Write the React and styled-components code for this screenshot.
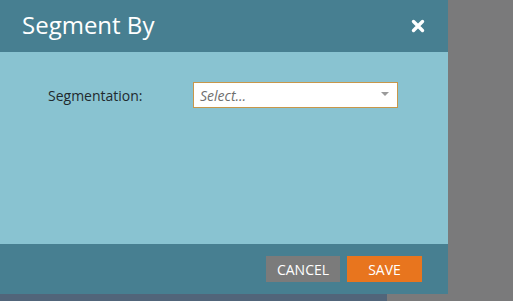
import React from "react";
import styled, { createGlobalStyle } from "styled-components";

const Global = createGlobalStyle`
  html, body { margin: 0; padding: 0; }
  body {
    width: 513px;
    height: 301px;
    overflow: hidden;
    background: #7a7a7b;
    font-family: "Open Sans", "Noto Sans", sans-serif;
  }
`;

const Page = styled.div`
  display: flex;
  flex-direction: column;
  width: 513px;
  height: 301px;
`;

const Dialog = styled.div`
  width: 448px;
  height: 294px;
  display: flex;
  flex-direction: column;
  background: #89c3d1;
`;

const Header = styled.div`
  height: 52px;
  flex: none;
  background: #477f91;
  display: flex;
  align-items: center;
  justify-content: space-between;
  padding: 0 22px 0 22px;
  box-sizing: border-box;
`;

const Title = styled.h1`
  margin: 0;
  font-size: 24px;
  font-weight: 400;
  color: #ffffff;
  line-height: 1;
  padding-bottom: 2px;
`;

const CloseButton = styled.button`
  border: 0;
  background: transparent;
  padding: 0;
  width: 16px;
  height: 16px;
  display: flex;
  align-items: center;
  justify-content: center;
  cursor: pointer;
  margin-bottom: 1px;
`;

const Body = styled.div`
  flex: 1;
  padding: 30px 0 0 48px;
`;

const FieldRow = styled.div`
  display: flex;
  align-items: center;
`;

const Label = styled.label`
  width: 145px;
  font-size: 14px;
  color: #1f2a2e;
`;

const SelectBox = styled.div`
  width: 205px;
  height: 26px;
  box-sizing: border-box;
  border: 1px solid #c8974a;
  background: #ffffff;
  display: flex;
  align-items: center;
  justify-content: space-between;
  padding: 0 8px 0 6px;
`;

const Placeholder = styled.span`
  font-size: 14px;
  font-style: italic;
  color: #6e6e6e;
`;

const Caret = styled.span`
  width: 0;
  height: 0;
  border-left: 4px solid transparent;
  border-right: 4px solid transparent;
  border-top: 4px solid #9a9a9a;
  margin-bottom: 2px;
`;

const Footer = styled.div`
  height: 50px;
  flex: none;
  background: #477f91;
  display: flex;
  align-items: center;
  justify-content: flex-end;
  gap: 7px;
  padding-right: 26px;
  box-sizing: border-box;
`;

const Button = styled.button`
  height: 26px;
  width: ${(p) => p.$w}px;
  border: 0;
  padding: 0;
  background: ${(p) => p.$bg};
  color: #ffffff;
  font-family: "Open Sans", "Noto Sans", sans-serif;
  font-size: 14px;
  text-transform: uppercase;
  cursor: pointer;
`;

const Strip = styled.div`
  width: 387px;
  height: 7px;
  background: #51657a;
`;

export default function App() {
  return (
    <>
      <Global />
      <Page>
        <Dialog>
          <Header>
            <Title>Segment By</Title>
            <CloseButton aria-label="Close">
              <svg width="14" height="14" viewBox="0 0 14 14">
                <path
                  d="M2.5 2.5 L11.5 11.5 M11.5 2.5 L2.5 11.5"
                  stroke="#ffffff"
                  strokeWidth="3.4"
                  strokeLinecap="round"
                />
              </svg>
            </CloseButton>
          </Header>
          <Body>
            <FieldRow>
              <Label>Segmentation:</Label>
              <SelectBox>
                <Placeholder>Select...</Placeholder>
                <Caret />
              </SelectBox>
            </FieldRow>
          </Body>
          <Footer>
            <Button $w={74} $bg="#7b7b7b">Cancel</Button>
            <Button $w={75} $bg="#e8751e">Save</Button>
          </Footer>
        </Dialog>
        <Strip />
      </Page>
    </>
  );
}
